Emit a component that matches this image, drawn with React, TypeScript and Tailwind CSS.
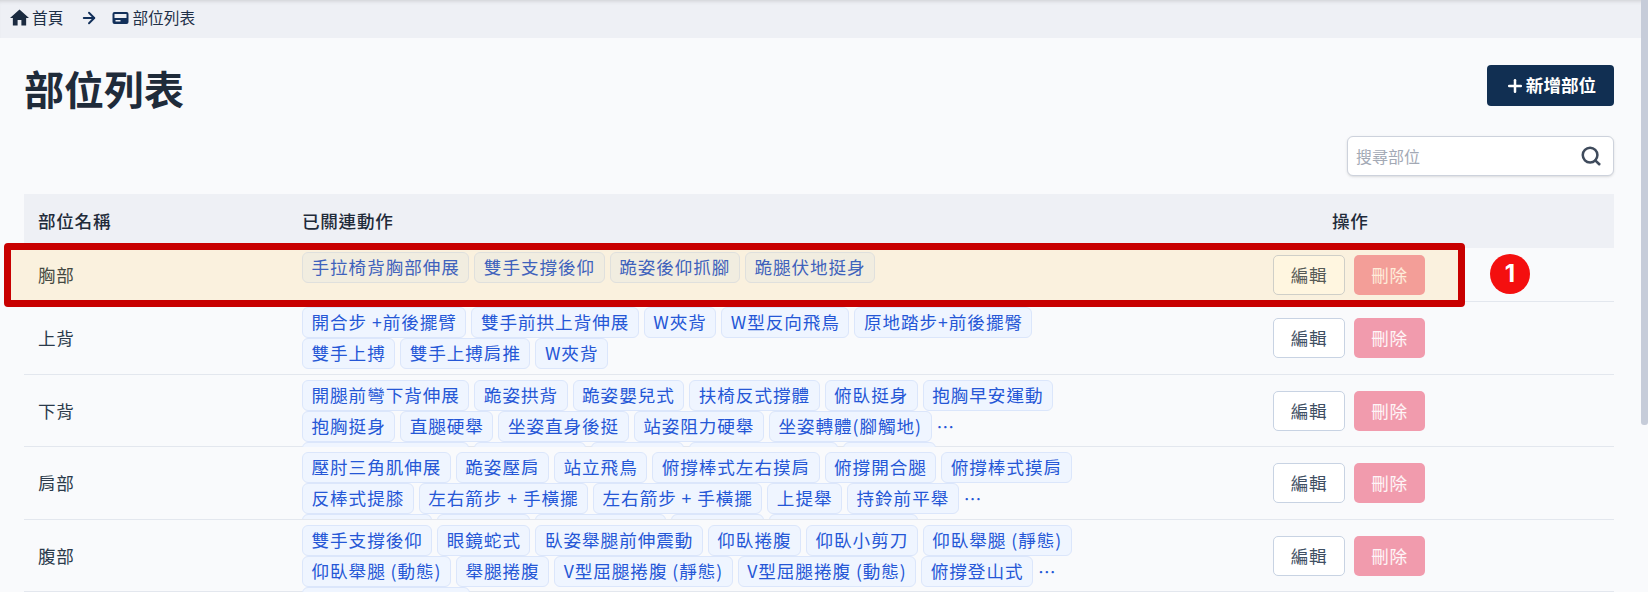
import React from 'react';
import { ArrowRight, Plus, Search } from 'lucide-react';

type Part = {
  name: string;
  moves: string[];
};

const parts: Part[] = [
  { name: '胸部', moves: ['手拉椅背胸部伸展', '雙手支撐後仰', '跪姿後仰抓腳', '跪腿伏地挺身'] },
  {
    name: '上背',
    moves: ['開合步 +前後擺臂', '雙手前拱上背伸展', 'W夾背', 'W型反向飛鳥', '原地踏步+前後擺臀', '雙手上搏', '雙手上搏肩推', 'W夾背'],
  },
  {
    name: '下背',
    moves: [
      '開腿前彎下背伸展', '跪姿拱背', '跪姿嬰兒式', '扶椅反式撐體', '俯臥挺身', '抱胸早安運動',
      '抱胸挺身', '直腿硬舉', '坐姿直身後挺', '站姿阻力硬舉', '坐姿轉體(腳觸地)',
      '站姿單腳硬舉伸展', '跪姿後伸腿', '俯臥超人', '站姿體前彎抓腳', '跪姿轉體',
    ],
  },
  {
    name: '肩部',
    moves: [
      '壓肘三角肌伸展', '跪姿壓肩', '站立飛鳥', '俯撐棒式左右摸肩', '俯撐開合腿', '俯撐棒式摸肩',
      '反棒式提膝', '左右箭步 + 手橫擺', '左右箭步 + 手橫擺', '上提舉', '持鈴前平舉',
      '持鈴側平舉伸', '啞鈴聳肩', '啞鈴肩推上舉', '坐姿飛鳥', '持鈴直立划船訓',
    ],
  },
  {
    name: '腹部',
    moves: [
      '雙手支撐後仰', '眼鏡蛇式', '臥姿舉腿前伸震動', '仰臥捲腹', '仰臥小剪刀', '仰臥舉腿 (靜態)',
      '仰臥舉腿 (動態)', '舉腿捲腹', 'V型屈腿捲腹 (靜態)', 'V型屈腿捲腹 (動態)', '俯撐登山式',
      '俯撐登山式 (慢速)',
    ],
  },
];

const PartRow: React.FC<{ part: Part; first?: boolean }> = ({ part, first }) => (
  <div
    className={`grid grid-cols-[264px_971px_1fr] border-b border-[#e3e7ee] ${first ? 'h-[54px]' : 'h-[72.5px]'}`}
  >
    <div className="flex items-center px-[14px] pt-[1px] tracking-[0.7px] text-[#2b3a4b]">{part.name}</div>
    <div className={`px-[14px] ${first ? 'pt-[4px]' : 'pt-[5px]'}`}>
      {/* clamped to two lines, the third one peeks through the padding like on the real page */}
      <div className="w-[790px] line-clamp-2 pb-[5px] leading-[31px] text-[#2b3a4b]">
        {part.moves.map((move, i) => (
          <span
            key={i}
            className="mr-[5px] inline-block h-[31px] rounded-[6px] border border-[#dbe6fb] bg-[#eff5ff] px-[8.5px] align-top leading-[28px] tracking-[0.95px] text-[#2557d6]"
          >
            {move}
          </span>
        ))}
      </div>
    </div>
    <div className="flex items-center gap-[9px] pl-[14px]">
      <button className="h-[40px] w-[72px] rounded-[5px] border border-[#c8d3e3] bg-white pt-[1px] tracking-[0.7px] text-[#3f4f63]">
        編輯
      </button>
      <button className="h-[40px] w-[71px] rounded-[5px] bg-[#f19bad] pt-[1px] tracking-[0.7px] text-white/90">刪除</button>
    </div>
  </div>
);

export default function App() {
  return (
    <div className="relative h-[592px] overflow-hidden bg-[#f9fafc] font-['Noto_Sans_CJK_TC','Inter',sans-serif] text-[17.6px] text-[#2b3a4b]">
      {/* Breadcrumb */}
      <div className="flex h-[38px] items-center bg-[#eef0f5] pb-[3px] pl-[10px] text-[15.7px] text-[#1f3048] shadow-[inset_0_4px_4px_-3px_rgba(0,0,0,0.15)]">
        <svg viewBox="2 3 20 17" className="h-[17px] w-[19px] fill-[#1b2b40]">
          <path d="M10 20v-6h4v6h5v-8h3L12 3 2 12h3v8z" />
        </svg>
        <span className="ml-[3px]">首頁</span>
        <ArrowRight className="ml-[17px] h-[18px] w-[18px] text-[#12305a]" strokeWidth={2.5} />
        <svg viewBox="0 0 16 12" className="ml-[14px] h-[12px] w-[17px] fill-[#12305a]">
          <path d="M2 0h12a2 2 0 0 1 2 2v8a2 2 0 0 1-2 2H2a2 2 0 0 1-2-2V2a2 2 0 0 1 2-2zm0 2v4h12V2zm1 6v1.5h5V8z" fillRule="evenodd" />
        </svg>
        <span className="ml-[3px]">部位列表</span>
      </div>

      <div className="pl-[24px] pr-[34px]">
        {/* Title */}
        <div className="flex items-start justify-between pt-[27px]">
          <h1 className="-mt-[2px] mb-[2px] text-[40px] font-bold leading-[50px] text-[#1f2b3a]">部位列表</h1>
          <button className="flex h-[41px] w-[127px] items-center justify-center gap-[1px] rounded-[4px] bg-[#112f52] font-bold text-white">
            <Plus className="h-[20px] w-[20px]" strokeWidth={3} />
            新增部位
          </button>
        </div>

        {/* Search */}
        <div className="mt-[31px] flex justify-end">
          <div className="-mt-[10px] flex h-[40px] w-[267px] items-center justify-between rounded-[6px] border border-[#cdd2dc] bg-white pl-[8px] pr-[11px] shadow-sm">
            <span className="text-[16px] text-[#a3a9b5]">搜尋部位</span>
            <Search className="h-[22px] w-[22px] text-[#3f4b5c]" strokeWidth={2.75} />
          </div>
        </div>

        {/* Table */}
        <div className="mt-[18px]">
          <div className="grid h-[54px] grid-cols-[264px_971px_1fr] items-center bg-[#eef0f5] font-medium tracking-[0.7px] text-[#1f2b3a]">
            <div className="px-[14px]">部位名稱</div>
            <div className="px-[14px]">已關連動作</div>
            <div className="pl-[73px]">操作</div>
          </div>
          {parts.map((part, i) => (
            <PartRow key={part.name} part={part} first={i === 0} />
          ))}
        </div>
      </div>

      {/* Highlight over the first row */}
      <div className="absolute left-[4px] top-[243px] h-[64px] w-[1461px] rounded-[4px] border-[7px] border-[#c80000] bg-[#ffb000]/12" />
      <div className="absolute left-[1490px] top-[254px] flex h-[40px] w-[40px] items-center justify-center rounded-full bg-[#f40f0f] font-['Inter',sans-serif] text-[24px] font-bold text-white">
        1
      </div>

      {/* Scrollbar */}
      <div className="absolute right-0 top-0 h-[425px] w-[7px] rounded-b-[3px] bg-[#c6ccd9]" />
    </div>
  );
}
